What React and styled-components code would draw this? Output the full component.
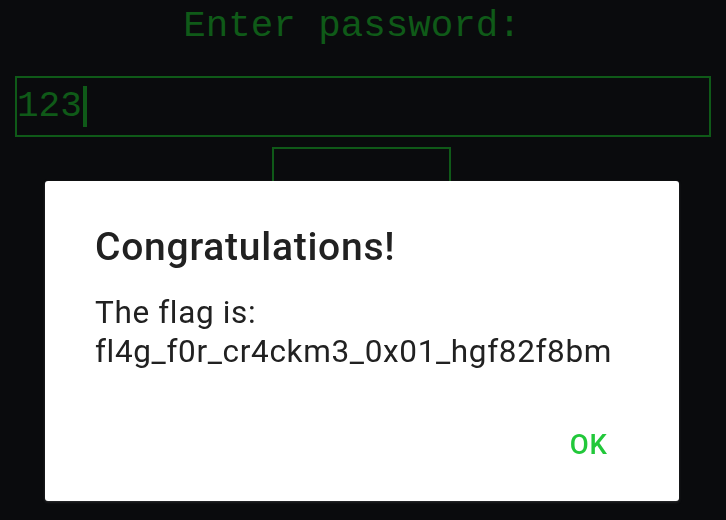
import React from "react";
import styled, { createGlobalStyle } from "styled-components";

const Global = createGlobalStyle`
  html, body { margin: 0; padding: 0; background: #0a0b0d; }
  body { width: 726px; height: 520px; overflow: hidden; }
`;

const Screen = styled.div`
  width: 726px;
  height: 520px;
  background: #0a0b0d;
  display: flex;
  flex-direction: column;
  align-items: center;
  font-family: "Liberation Mono", "Courier New", monospace;
  color: #0f5a18;
`;

const Prompt = styled.div`
  font-size: 37.5px;
  line-height: 42px;
  margin-top: 5px;
  padding-right: 22px;
  white-space: pre;
`;

const Field = styled.div`
  box-sizing: border-box;
  width: 696px;
  height: 61px;
  margin-top: 29px;
  border: 2px solid #0f5a18;
  display: flex;
  align-items: center;
  font-size: 36px;
  line-height: 42px;
  padding-left: 0;
`;

const Caret = styled.span`
  display: inline-block;
  width: 4px;
  height: 41px;
  margin-left: 1px;
  background: #0f5a18;
`;

const SubmitBox = styled.div`
  box-sizing: border-box;
  width: 179px;
  height: 64px;
  margin-top: 10px;
  margin-left: -3px;
  border: 2px solid #0f5a18;
`;

const Overlay = styled.div`
  position: fixed;
  inset: 0;
  display: flex;
  justify-content: center;
  align-items: flex-start;
  padding-top: 181px;
  box-sizing: border-box;
`;

const Dialog = styled.div`
  width: 634px;
  margin-right: 2px;
  background: #ffffff;
  border-radius: 3px;
  box-shadow: 0 1px 3px rgba(120, 120, 120, 0.35);
  box-sizing: border-box;
  padding: 43px 71px 40px 50px;
  display: flex;
  flex-direction: column;
  font-family: Roboto, "Noto Sans", sans-serif;
`;

const Title = styled.div`
  font-size: 39px;
  line-height: 46px;
  font-weight: 500;
  letter-spacing: 0.75px;
  color: #212121;
`;

const Message = styled.div`
  margin-top: 24px;
  font-size: 31.5px;
  line-height: 38.5px;
  letter-spacing: 0.65px;
  color: #212121;
`;

const Actions = styled.div`
  margin-top: 58px;
  display: flex;
  justify-content: flex-end;
`;

const OkButton = styled.button`
  border: none;
  background: none;
  padding: 0;
  font-family: Roboto, "Noto Sans", sans-serif;
  font-size: 27.5px;
  line-height: 32px;
  font-weight: 500;
  letter-spacing: 1px;
  color: #22c83a;
  cursor: pointer;
`;

export default function App() {
  return (
    <>
      <Global />
      <Screen>
        <Prompt>Enter password:</Prompt>
        <Field>
          <span>123</span>
          <Caret />
        </Field>
        <SubmitBox />
      </Screen>
      <Overlay>
        <Dialog>
          <Title>Congratulations!</Title>
          <Message>
            The flag is:
            <br />
            fl4g_f0r_cr4ckm3_0x01_hgf82f8bm
          </Message>
          <Actions>
            <OkButton>OK</OkButton>
          </Actions>
        </Dialog>
      </Overlay>
    </>
  );
}
